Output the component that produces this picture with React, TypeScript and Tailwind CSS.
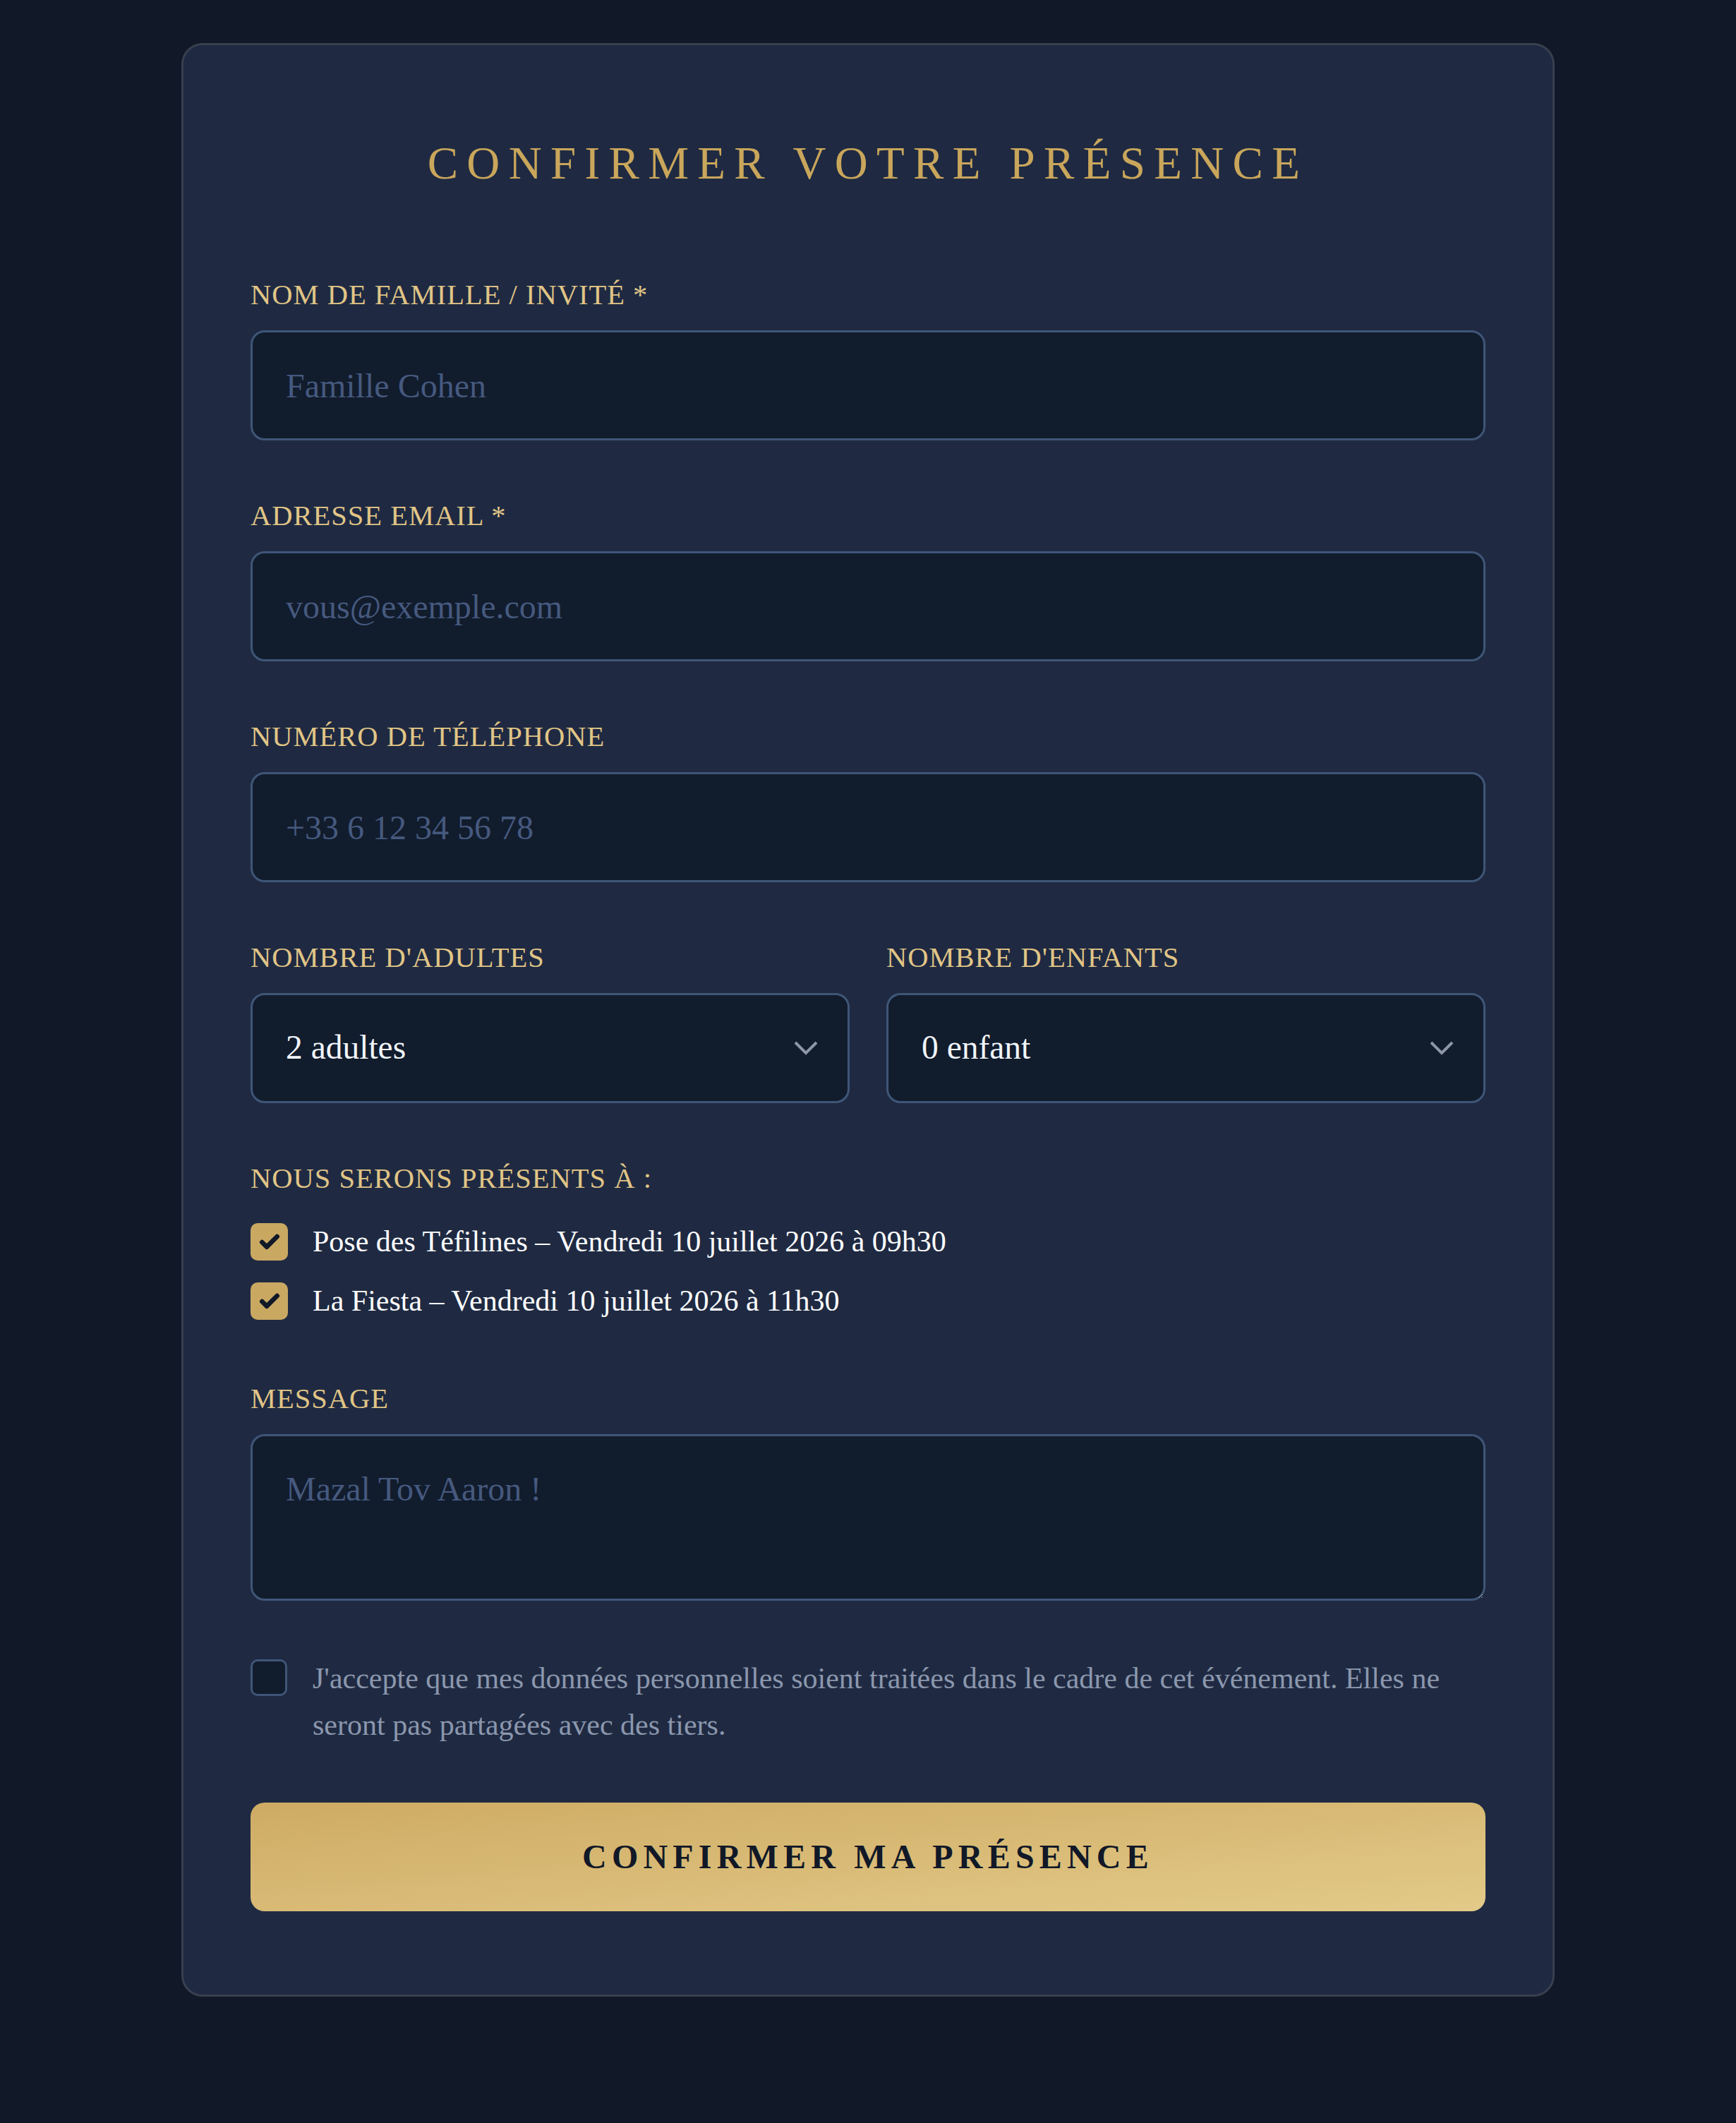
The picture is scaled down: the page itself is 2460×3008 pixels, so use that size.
import { Check } from "lucide-react";

const serif = { fontFamily: '"Liberation Serif", "Times New Roman", serif' };

function Label({ children }: { children: React.ReactNode }) {
  return (
    <label className="mb-[20px] block text-[40.5px] leading-[60px] tracking-[0.025em] text-[#e1c586]">
      {children}
    </label>
  );
}

function TextField({ label, placeholder, type = "text" }: { label: string; placeholder: string; type?: string }) {
  return (
    <div>
      <Label>{label}</Label>
      <input
        type={type}
        placeholder={placeholder}
        className="block h-[156px] w-full rounded-[20px] border-[3px] border-[#3f5678] bg-[#111c2d] px-[47px] text-[48px] text-slate-100 outline-none placeholder:text-[#46597e]"
      />
    </div>
  );
}

function SelectField({ label, value, options }: { label: string; value: string; options: string[] }) {
  return (
    <div>
      <Label>{label}</Label>
      <div className="relative">
        <select
          defaultValue={value}
          className="block h-[156px] w-full appearance-none rounded-[20px] border-[3px] border-[#3f5678] bg-[#111c2d] px-[47px] text-[47.5px] text-slate-100 outline-none"
        >
          {options.map((o) => (
            <option key={o}>{o}</option>
          ))}
        </select>
        <svg
          className="pointer-events-none absolute right-[45px] top-1/2 -translate-y-1/2"
          width="34"
          height="20"
          viewBox="0 0 34 20"
          fill="none"
        >
          <polyline points="2,2 17,17 32,2" stroke="#8e97a8" strokeWidth="4" />
        </svg>
      </div>
    </div>
  );
}

function Checked({ children }: { children: React.ReactNode }) {
  return (
    <div className="flex items-center gap-[35px]">
      <span className="flex h-[53px] w-[53px] shrink-0 items-center justify-center rounded-[10px] bg-[#c9a862]">
        <Check size={32} strokeWidth={5} color="#111827" />
      </span>
      <span className="text-[42px] leading-[63px] text-white">{children}</span>
    </div>
  );
}

export default function App() {
  return (
    <div className="flex min-h-screen justify-center bg-[#111827] pb-[179px] pt-[61px]" style={serif}>
      <div className="w-[1946px] rounded-[30px] border-[3px] border-[#383f4e] bg-[#1f2a42] px-[95px] pb-[116px] pt-[127px]">
        <h2 className="text-center text-[65px] leading-[81px] tracking-[0.19em] text-[#c9a65b]">
          CONFIRMER VOTRE PRÉSENCE
        </h2>

        <form className="mt-[116px] flex flex-col gap-[77px]" onSubmit={(e) => e.preventDefault()}>
          <TextField label="NOM DE FAMILLE / INVITÉ *" placeholder="Famille Cohen" />
          <TextField label="ADRESSE EMAIL *" placeholder="vous@exemple.com" type="email" />
          <TextField label="NUMÉRO DE TÉLÉPHONE" placeholder="+33 6 12 34 56 78" type="tel" />

          <div className="grid grid-cols-2 gap-[52px]">
            <SelectField label="NOMBRE D'ADULTES" value="2 adultes" options={["1 adulte", "2 adultes", "3 adultes", "4 adultes"]} />
            <SelectField label="NOMBRE D'ENFANTS" value="0 enfant" options={["0 enfant", "1 enfant", "2 enfants", "3 enfants"]} />
          </div>

          <div>
            <div className="block text-[40.5px] leading-[60px] tracking-[0.025em] text-[#e1c586]">NOUS SERONS PRÉSENTS À :</div>
            <div className="mt-[28px] flex flex-col gap-[21px]">
              <Checked>Pose des Téfilines – Vendredi 10 juillet 2026 à 09h30</Checked>
              <Checked>La Fiesta – Vendredi 10 juillet 2026 à 11h30</Checked>
            </div>
          </div>

          <div>
            <Label>MESSAGE</Label>
            <textarea
              placeholder="Mazal Tov Aaron !"
              className="block h-[236px] w-full rounded-[20px] border-[3px] border-[#3f5678] bg-[#111c2d] px-[47px] py-[40px] text-[48px] leading-[69px] text-slate-100 outline-none placeholder:text-[#46597e]"
            />
          </div>

          <div className="flex items-start gap-[36px]">
            <span className="mt-[6px] h-[52px] w-[52px] shrink-0 rounded-[10px] border-[3px] border-[#3f5678] bg-[#111c2d]" />
            <p className="text-[42px] leading-[66px] text-[#8b97ad]">
              J'accepte que mes données personnelles soient traitées dans le cadre de cet événement. Elles ne seront pas
              partagées avec des tiers.
            </p>
          </div>

          <button
            type="submit"
            className="h-[154px] w-full rounded-[20px] bg-gradient-to-br from-[#ceab64] to-[#e3ca88] text-[48px] font-bold tracking-[0.15em] text-[#111827]"
          >
            CONFIRMER MA PRÉSENCE
          </button>
        </form>
      </div>
    </div>
  );
}
